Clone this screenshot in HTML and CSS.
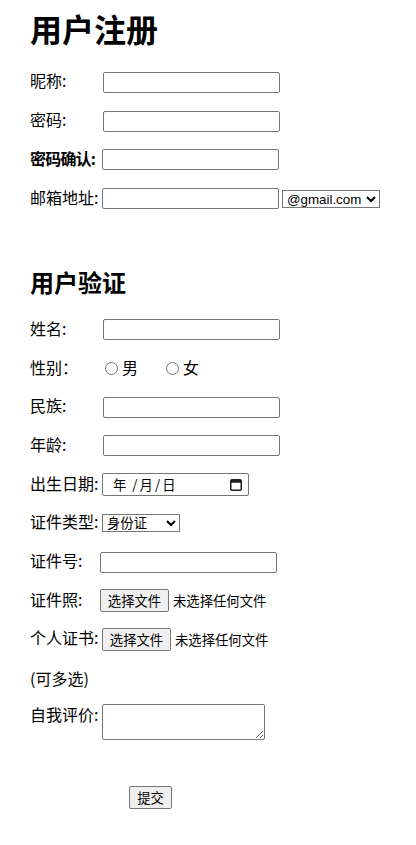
FILE: index.html
```html
<!DOCTYPE html>
<html lang="zh-CN">
<head>
<meta charset="utf-8">
<title>用户注册</title>
<link rel="stylesheet" href="styles.css">
</head>
<body>
<main class="page">
  <h1 class="title">用户注册</h1>
  <div class="row"><span class="lbl">昵称:</span><input class="text" type="text"></div>
  <div class="row"><span class="lbl">密码:</span><input class="text" type="password"></div>
  <div class="row"><span class="lbl lbl-72 strong">密码确认:</span><input class="text" type="password"></div>
  <div class="row"><span class="lbl lbl-72">邮箱地址:</span><input class="text" type="text"><select class="sel sel-mail"><option>@gmail.com</option></select></div>

  <h2 class="subtitle">用户验证</h2>
  <div class="row"><span class="lbl">姓名:</span><input class="text" type="text"></div>
  <div class="row"><span class="lbl lbl-75">性别：</span><input class="radio" type="radio" name="sex"><span class="opt">男</span><input class="radio radio-2" type="radio" name="sex"><span class="opt">女</span></div>
  <div class="row"><span class="lbl">民族:</span><input class="text" type="text"></div>
  <div class="row"><span class="lbl">年龄:</span><input class="text" type="text"></div>
  <div class="row"><span class="lbl lbl-72">出生日期:</span>
    <span class="date"><span class="date-txt"><span>年</span><span class="sep sep-1">/</span><span>月</span><span class="sep">/</span><span>日</span></span>
      <svg class="cal" width="12" height="12" viewBox="0 0 12 12"><rect x="0.75" y="0.75" width="10.5" height="10.5" rx="1.5" fill="none" stroke="#1f1f1f" stroke-width="1.5"/><rect x="0.75" y="0.75" width="10.5" height="3" fill="#1f1f1f"/><rect x="2.5" y="0" width="1.5" height="1.5" fill="#1f1f1f"/><rect x="8" y="0" width="1.5" height="1.5" fill="#1f1f1f"/></svg>
    </span>
  </div>
  <div class="row"><span class="lbl lbl-72">证件类型:</span><select class="sel sel-id"><option>身份证</option></select></div>
  <div class="row"><span class="lbl lbl-70">证件号:</span><input class="text" type="text"></div>
  <div class="row"><span class="lbl lbl-70">证件照:</span><span class="file"><button class="btn" type="button">选择文件</button><span class="file-txt">未选择任何文件</span></span></div>
  <div class="row"><span class="lbl lbl-72">个人证书:</span><span class="file"><button class="btn" type="button">选择文件</button><span class="file-txt">未选择任何文件</span></span></div>
  <div class="row"><span class="lbl-free">(可多选)</span></div>
  <div class="row row-top"><span class="lbl lbl-72 lbl-area">自我评价:</span><textarea class="area"></textarea></div>
  <div class="submit-row"><button class="btn btn-submit" type="submit">提交</button></div>
</main>
</body>
</html>
```

FILE: styles.css
```css
html, body {
  margin: 0;
  padding: 0;
  background: #ffffff;
}

body {
  font-family: "Noto Sans CJK SC", "Liberation Sans", sans-serif;
  font-size: 16px;
  color: #000000;
}

.page {
  padding-left: 30px;
}

.title {
  margin: 0 0 14.15px 0;
  padding-top: 7.5px;
  height: 41.5px;
  line-height: 40px;
  font-size: 32px;
  font-weight: 700;
}

.subtitle {
  margin: 48.6px 0 12.1px 0;
  height: 32px;
  line-height: 32px;
  font-size: 24px;
  font-weight: 700;
}

.row {
  display: flex;
  align-items: center;
  height: 38.7px;
}

.row-top {
  align-items: flex-start;
  height: auto;
  margin-top: 6.35px;
}

.lbl {
  flex: none;
  width: 73px;
  line-height: 21px;
  padding-bottom: 3px;
  white-space: nowrap;
}

.lbl-area {
  padding-bottom: 0;
}

.lbl-72 { width: 72px; }
.lbl-70 { width: 70px; }
.lbl-75 { width: 75px; }

.strong {
  font-weight: 700;
  letter-spacing: -0.8px;
}

.lbl-free {
  line-height: 21px;
}

.text {
  box-sizing: border-box;
  width: 177px;
  height: 21px;
  margin: 0;
  padding: 1px 2px;
  border: 1px solid #767676;
  border-radius: 2px;
  font-family: "Liberation Sans", "Noto Sans CJK SC", sans-serif;
  font-size: 13.333px;
  background: #ffffff;
}

.sel {
  box-sizing: border-box;
  height: 18px;
  margin: 0;
  border: 1px solid #767676;
  border-radius: 0;
  font-family: "Liberation Sans", "Noto Sans CJK SC", sans-serif;
  font-size: 13.333px;
  color: #000000;
  background: #ffffff;
}

.sel-mail {
  width: 98px;
  margin-left: 3px;
}

.sel-id {
  width: 78px;
}

.radio {
  flex: none;
  width: 13px;
  height: 13px;
  margin: 0 4px 0 0;
}

.radio-2 {
  margin-left: 28px;
}

.opt {
  line-height: 21px;
  padding-bottom: 2px;
}

.date {
  box-sizing: border-box;
  display: flex;
  align-items: center;
  justify-content: space-between;
  width: 147px;
  height: 23px;
  padding: 0 6px 0 10px;
  border: 1px solid #767676;
  border-radius: 2px;
  font-size: 13.333px;
  background: #ffffff;
}

.date-txt {
  display: flex;
  align-items: center;
}

.sep {
  margin: 0 2px;
}

.sep-1 {
  margin-left: 6px;
}

.cal {
  flex: none;
}

.file {
  display: flex;
  align-items: center;
  font-size: 13.333px;
}

.btn {
  box-sizing: border-box;
  height: 23px;
  margin: 0;
  padding: 0 6px;
  border: 1px solid #767676;
  border-radius: 2px;
  background: #efefef;
  color: #000000;
  font-family: "Noto Sans CJK SC", "Liberation Sans", sans-serif;
  font-size: 13.333px;
  line-height: 21px;
}

.file .btn {
  width: 69px;
}

.file-txt {
  margin-left: 4px;
}

.area {
  box-sizing: border-box;
  width: 163px;
  height: 36px;
  margin: 0;
  padding: 2px;
  border: 1px solid #767676;
  border-radius: 2px;
  font-family: "Liberation Mono", monospace;
  font-size: 13.333px;
}

.submit-row {
  display: flex;
  margin-top: 46px;
  padding-left: 99px;
}

.btn-submit {
  width: 43px;
}
```
